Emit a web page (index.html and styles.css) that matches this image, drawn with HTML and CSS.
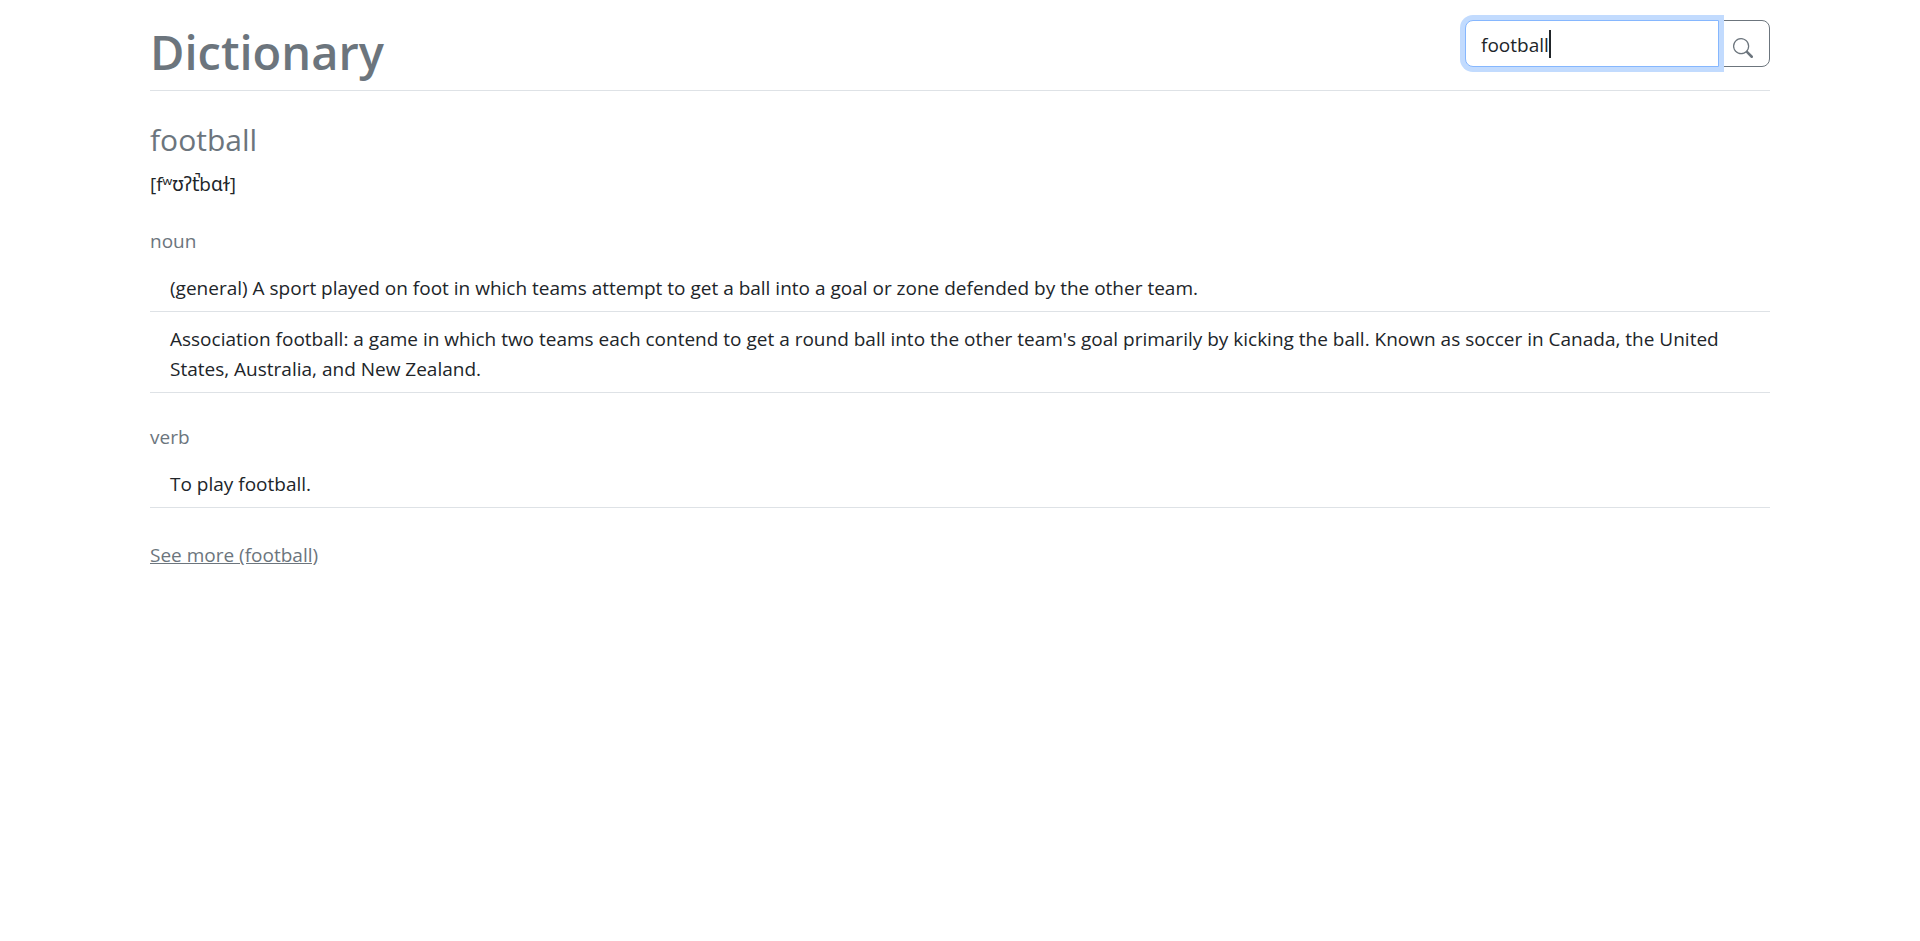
FILE: index.html
```html
<!DOCTYPE html>
<html lang="en">
<head>
<meta charset="utf-8">
<meta name="viewport" content="width=device-width, initial-scale=1">
<title>Dictionary</title>
<link rel="stylesheet" href="styles.css">
</head>
<body>
<div class="container">
  <header class="header">
    <h1 class="title">Dictionary</h1>
    <form class="search" role="search">
      <div class="search-field">
        <input class="search-input" type="text" value="football" aria-label="Search word">
        <span class="caret" aria-hidden="true"></span>
      </div>
      <button class="search-button" type="submit" aria-label="Search">
        <svg class="search-icon" viewBox="0 0 16 16" fill="currentColor" aria-hidden="true"><path d="M11.742 10.344a6.500 6.500 0 1 0-1.397 1.398h-.001c.03.04.062.078.098.115l3.850 3.850a1 1 0 0 0 1.415-1.414l-3.850-3.850a1.007 1.007 0 0 0-.115-.1zM12 6.500a5.500 5.500 0 1 1-11 0 5.500 5.500 0 0 1 11 0z"/></svg>
      </button>
    </form>
  </header>
  <main>
    <h2 class="word">football</h2>
    <p class="phonetic">[fʷʊʔ<span class="unreleased">t̚</span>bɑɫ]</p>
    <section class="meaning">
      <h3 class="part">noun</h3>
      <ul class="definitions">
        <li class="definition">(general) A sport played on foot in which teams attempt to get a ball into a goal or zone defended by the other team.</li>
        <li class="definition">Association football: a game in which two teams each contend to get a round ball into the other team's goal primarily by kicking the ball. Known as soccer in Canada, the United States, Australia, and New Zealand.</li>
      </ul>
    </section>
    <section class="meaning">
      <h3 class="part">verb</h3>
      <ul class="definitions">
        <li class="definition">To play football.</li>
      </ul>
    </section>
    <a class="more" href="#football">See more (football)</a>
  </main>
</div>
</body>
</html>
```

FILE: styles.css
```css
* { box-sizing: border-box; }

body {
  margin: 0;
  background: #fff;
  color: #212529;
  font-family: "Open Sans", "Noto Sans", sans-serif;
  font-size: 19px;
  line-height: 30px;
}

.container { padding: 20px 150px; }

.header {
  display: flex;
  justify-content: space-between;
  align-items: flex-start;
  height: 71px;
  margin-bottom: 31px;
  border-bottom: 1px solid #dee2e6;
}

.title {
  margin: 0;
  color: #6c757d;
  font-size: 47px;
  font-weight: 600;
  line-height: 64px;
}

.search { display: flex; }

.search-field {
  position: relative;
  z-index: 1;
}

.search-input {
  display: block;
  width: 254px;
  height: 47px;
  padding: 9px 15px 6px;
  border: 1px solid #86b7fe;
  border-radius: 8px 0 0 8px;
  outline: 0;
  box-shadow: 0 0 0 5px #c2dbfe;
  background: #fff;
  color: #212529;
  font: inherit;
}

.caret {
  position: absolute;
  top: 10px;
  left: 84px;
  width: 2px;
  height: 28px;
  background: #212529;
}

.search-button {
  display: flex;
  align-items: flex-end;
  width: 52px;
  height: 47px;
  margin-left: -1px;
  padding: 0 15px 8px 14px;
  border: 1px solid #6c757d;
  border-radius: 0 8px 8px 0;
  background: #fff;
  color: #6c757d;
}

.search-icon { width: 20px; height: 20px; }

.word {
  margin: 0 0 11px;
  color: #6c757d;
  font-size: 30px;
  font-weight: 500;
  line-height: 36px;
}

.phonetic { margin: 0 0 30px; }

.unreleased { font-family: "DejaVu Sans", sans-serif; }

.meaning { margin-bottom: 32px; }

.part {
  margin: 0 0 8px;
  color: #6c757d;
  font-size: 19px;
  font-weight: 500;
  line-height: 24px;
}

.definitions {
  margin: 0;
  padding: 0;
  list-style: none;
}

.definition {
  padding: 12px 20px 8px;
  border-bottom: 1px solid #dee2e6;
}

.more { color: #6c757d; }
```
